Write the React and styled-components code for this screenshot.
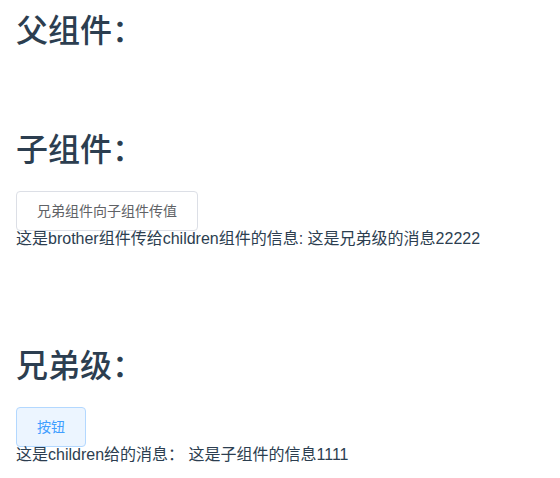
import React from "react";
import styled, { createGlobalStyle, css } from "styled-components";

const GlobalStyle = createGlobalStyle`
  body {
    margin: 0;
    background: #fff;
    font-family: "Liberation Sans", Arial, "Noto Sans CJK SC", sans-serif;
    color: #2c3e50;
  }
`;

const Page = styled.div`
  display: flex;
  flex-direction: column;
  align-items: flex-start;
  padding: 15px 16px 0;
`;

const Section = styled.section`
  display: flex;
  flex-direction: column;
  align-items: flex-start;
  margin-top: ${(props) => props.$offset || 0}px;
`;

const Title = styled.h1`
  margin: 0;
  font-family: "Liberation Sans", "Noto Sans CJK SC", sans-serif;
  font-size: 32px;
  font-weight: 500;
  line-height: 32px;
  color: #2c3e50;
`;

const Button = styled.button`
  display: block;
  box-sizing: border-box;
  height: 40px;
  margin-top: 25px;
  padding: 0 20px;
  border-radius: 4px;
  font-family: "Liberation Sans", "Noto Sans CJK SC", sans-serif;
  font-size: 14px;
  line-height: 1;
  cursor: pointer;
  border: 1px solid #dcdfe6;
  background: #fff;
  color: #606266;

  ${(props) =>
    props.$primary &&
    css`
      border-color: #b3d8ff;
      background: #ecf5ff;
      color: #409eff;
    `}
`;

const Message = styled.p`
  margin: 0;
  font-size: 16px;
  line-height: 16px;
  color: #2c3e50;
`;

export default function App() {
  return (
    <Page>
      <GlobalStyle />
      <Section>
        <Title>父组件：</Title>
      </Section>

      <Section $offset={87}>
        <Title>子组件：</Title>
        <Button>兄弟组件向子组件传值</Button>
        <Message>这是brother组件传给children组件的信息: 这是兄弟级的消息22222</Message>
      </Section>

      <Section $offset={103}>
        <Title>兄弟级：</Title>
        <Button $primary>按钮</Button>
        <Message>这是children给的消息： 这是子组件的信息1111</Message>
      </Section>
    </Page>
  );
}
